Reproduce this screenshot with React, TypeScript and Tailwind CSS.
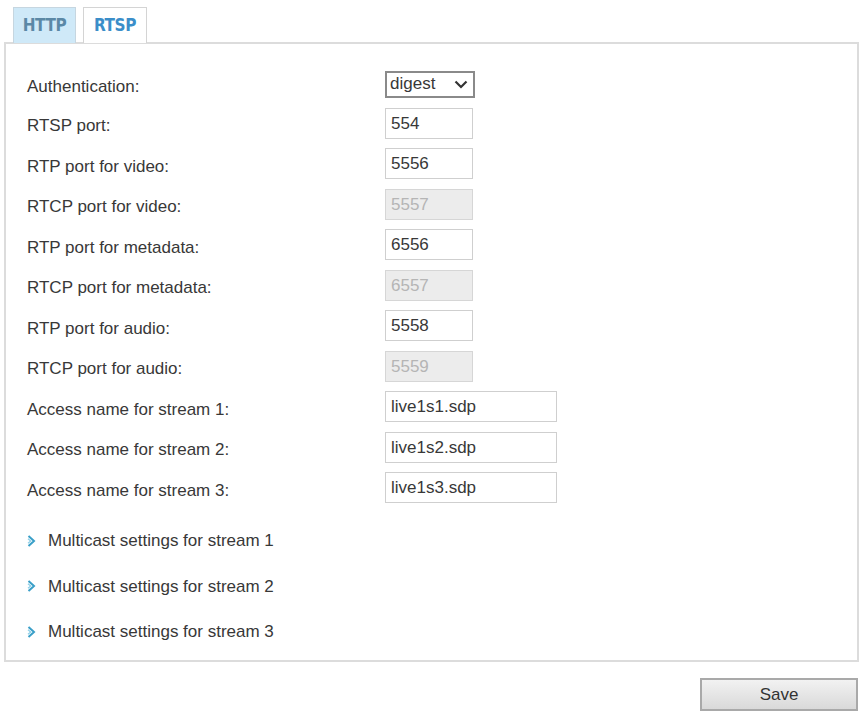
import React from 'react';

const rows: { label: string; value: string; kind: 'select' | 'short' | 'disabled' | 'long' }[] = [
    { label: 'Authentication:', value: 'digest', kind: 'select' },
    { label: 'RTSP port:', value: '554', kind: 'short' },
    { label: 'RTP port for video:', value: '5556', kind: 'short' },
    { label: 'RTCP port for video:', value: '5557', kind: 'disabled' },
    { label: 'RTP port for metadata:', value: '6556', kind: 'short' },
    { label: 'RTCP port for metadata:', value: '6557', kind: 'disabled' },
    { label: 'RTP port for audio:', value: '5558', kind: 'short' },
    { label: 'RTCP port for audio:', value: '5559', kind: 'disabled' },
    { label: 'Access name for stream 1:', value: 'live1s1.sdp', kind: 'long' },
    { label: 'Access name for stream 2:', value: 'live1s2.sdp', kind: 'long' },
    { label: 'Access name for stream 3:', value: 'live1s3.sdp', kind: 'long' },
];

const Arrow = () => (
    <svg width="9" height="12" viewBox="0 0 9 12" className="shrink-0">
        <path d="M1.5 1 L7 6 L1.5 11" fill="none" stroke="#3a9fc8" strokeWidth="2" />
        <path d="M1 3.8 L3.6 6 L1 8.2" fill="none" stroke="#8fd0e8" strokeWidth="1.3" />
    </svg>
);

const Field = ({ value, kind }: { value: string; kind: string }) => {
    if (kind === 'select') {
        return (
            <div className="w-[90px] h-[27px] border-2 border-[#8a8a8a] bg-white flex items-center justify-between pl-[3px] pr-[5px] text-[17px] text-[#383838]">
                <span>{value}</span>
                <svg width="14" height="9" viewBox="0 0 14 9">
                    <path d="M1.5 1.5 L7 7 L12.5 1.5" fill="none" stroke="#333" strokeWidth="2.2" />
                </svg>
            </div>
        );
    }
    const width = kind === 'long' ? 'w-[172px]' : 'w-[88px]';
    const tone = kind === 'disabled' ? 'bg-[#ececec] text-[#b5b5b5] border-[#d6d6d6]' : 'bg-white text-[#383838] border-[#cfcfcf]';
    return (
        <div className={`${width} h-[31px] border ${tone} flex items-center px-[5px] text-[17px]`}>
            {value}
        </div>
    );
};

export default function App() {
    return (
        <div className="w-[862px] h-[712px] bg-white relative overflow-hidden font-['Liberation_Sans',Arial,sans-serif]">
            {/* tabs */}
            <div className="flex gap-[7px] pl-[13px] pt-[7px] h-[43px]">
                <div className="w-[63px] h-[36px] bg-[#cfe9f8] border border-[#c6d6e0] border-b-0 flex items-center justify-center text-[17px] font-bold text-[#5b88a6] font-['DejaVu_Sans_Condensed','DejaVu_Sans',sans-serif] tracking-tight">HTTP</div>
                <div className="w-[64px] h-[36px] bg-white border border-[#d4d4d4] border-b-0 flex items-center justify-center text-[17px] font-bold text-[#3b8ec9] font-['DejaVu_Sans_Condensed','DejaVu_Sans',sans-serif] tracking-tight">RTSP</div>
            </div>

            {/* panel */}
            <div className="ml-[4px] w-[855px] h-[620px] -mt-px border-2 border-[#dcdcdc] pt-[21px] pl-[21px]">
                <div className="flex flex-col">
                    {rows.map((r, i) => (
                        <div key={r.label} className={`flex items-center ${i === 0 ? 'h-[38px]' : 'h-[40.5px]'}`}>
                            <div className="w-[358px] text-[17px] text-[#383838] pt-[5px]">{r.label}</div>
                            <Field value={r.value} kind={r.kind} />
                        </div>
                    ))}
                </div>
                <div className="flex flex-col mt-[10px]">
                    {[1, 2, 3].map(n => (
                        <div key={n} className="h-[45.5px] flex items-center gap-[12px] text-[17px] text-[#383838]">
                            <Arrow />
                            <span>Multicast settings for stream {n}</span>
                        </div>
                    ))}
                </div>
            </div>

            <div className="flex justify-end pr-[4px] mt-[16px]">
                <button className="w-[158px] h-[33px] border-2 border-[#a9a9a9] bg-gradient-to-b from-[#f2f2f2] to-[#d9d9d9] text-[17px] text-[#333]">Save</button>
            </div>
        </div>
    );
}
